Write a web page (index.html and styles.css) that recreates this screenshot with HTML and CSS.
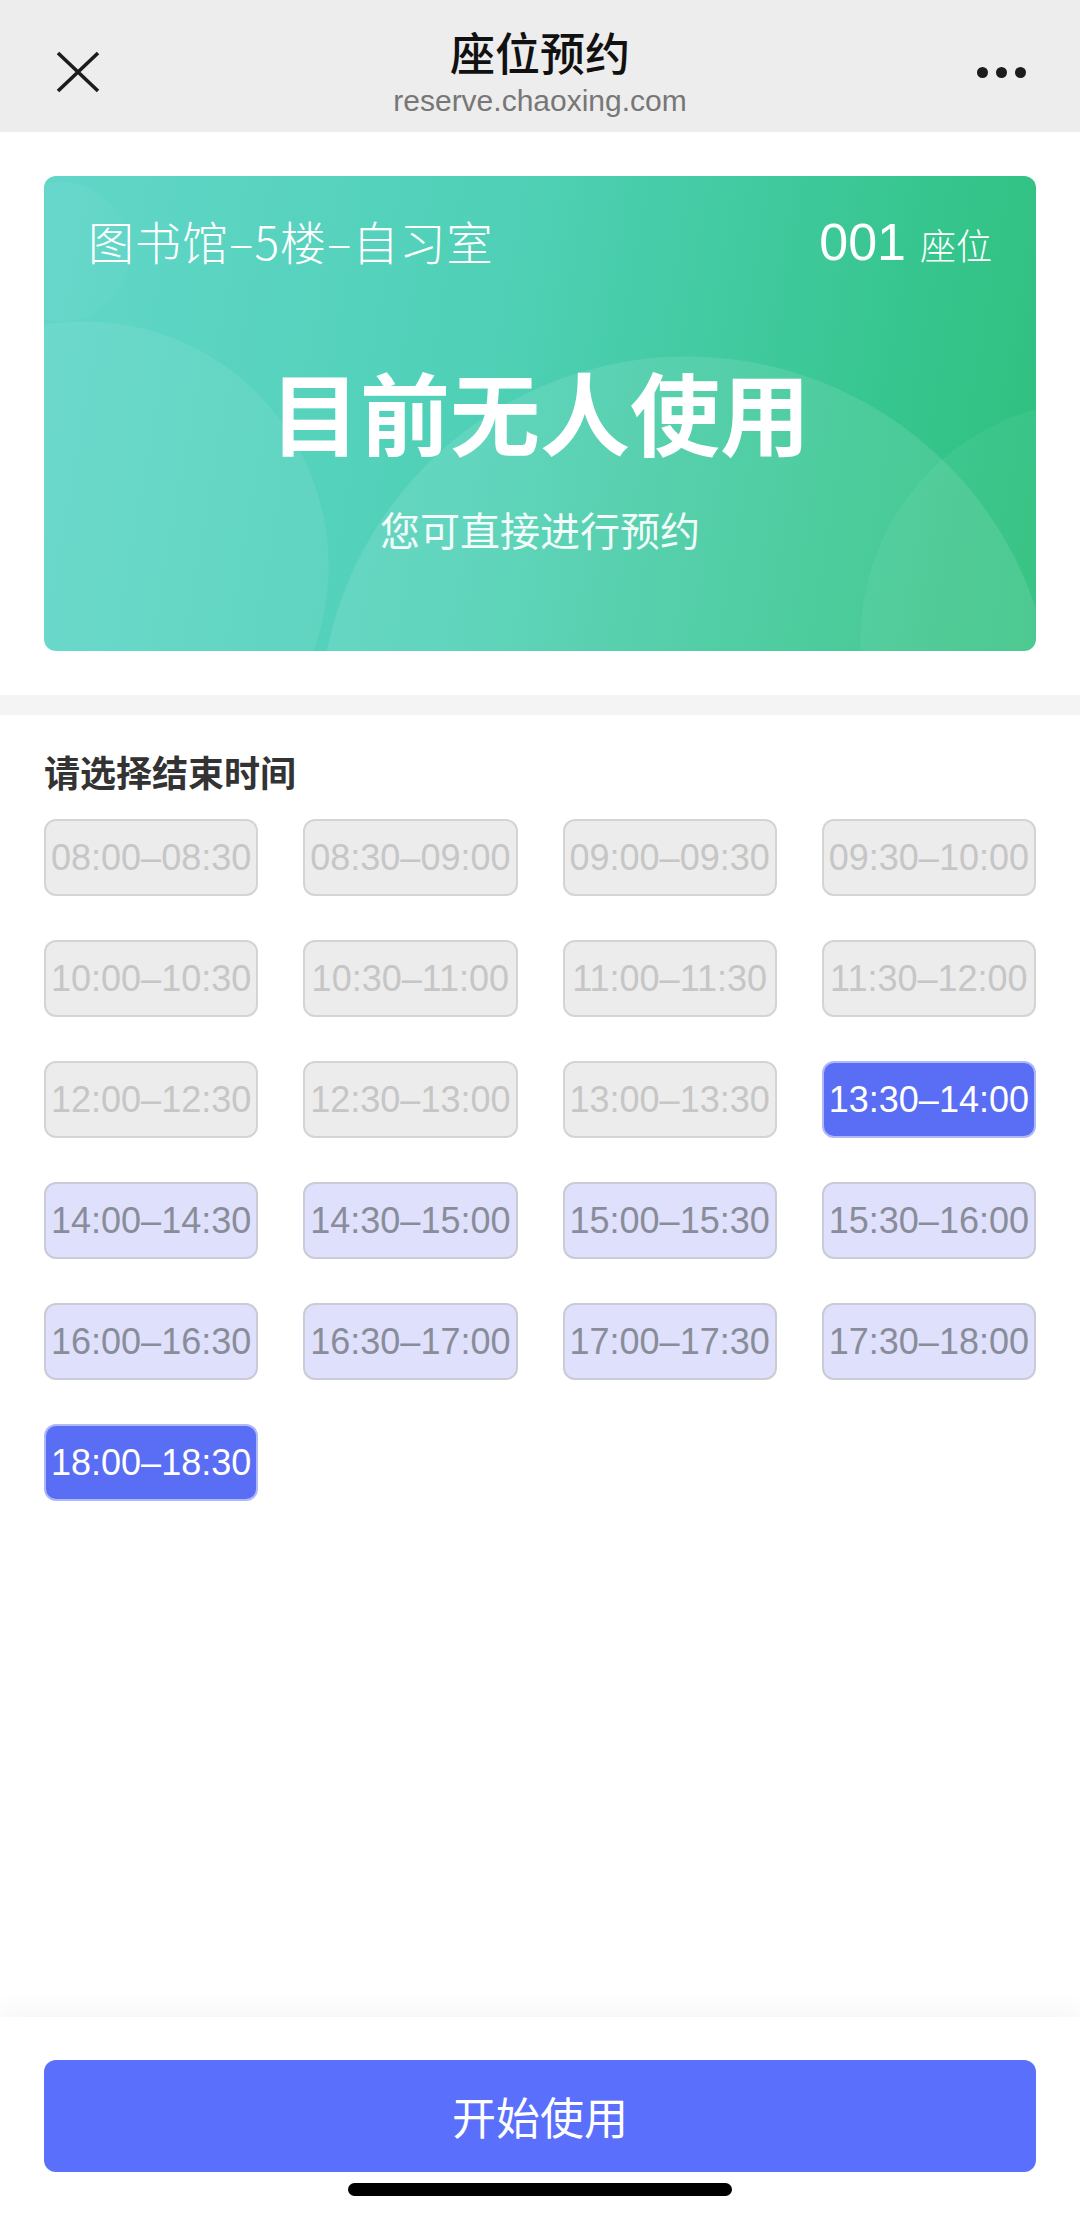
FILE: index.html
```html
<!DOCTYPE html>
<html lang="zh-CN">
<head>
<meta charset="UTF-8">
<meta name="viewport" content="width=device-width, initial-scale=1.0">
<title>座位预约</title>
<link rel="stylesheet" href="styles.css">
</head>
<body>
  <header class="nav">
    <div class="nav-side">
      <svg class="nav-close" width="44" height="42" viewBox="0 0 44 42">
        <path d="M2 2 L42 40 M42 2 L2 40" stroke="#1c1c1c" stroke-width="3.6" fill="none"/>
      </svg>
    </div>
    <div class="nav-center">
      <div class="nav-title">座位预约</div>
      <div class="nav-url">reserve.chaoxing.com</div>
    </div>
    <div class="nav-side nav-right">
      <span class="dot"></span><span class="dot"></span><span class="dot"></span>
    </div>
  </header>

  <main class="page">
    <section class="seat-card">
      <div class="seat-head">
        <span class="seat-place">图书馆–5楼–自习室</span>
        <span class="seat-no">001<small>座位</small></span>
      </div>
      <div class="seat-status">目前无人使用</div>
      <div class="seat-tip">您可直接进行预约</div>
    </section>

    <div class="divider"></div>

    <section class="time-section">
      <h2 class="time-title">请选择结束时间</h2>
      <div class="time-grid">
        <button class="slot disabled">08:00–08:30</button>
        <button class="slot disabled">08:30–09:00</button>
        <button class="slot disabled">09:00–09:30</button>
        <button class="slot disabled">09:30–10:00</button>
        <button class="slot disabled">10:00–10:30</button>
        <button class="slot disabled">10:30–11:00</button>
        <button class="slot disabled">11:00–11:30</button>
        <button class="slot disabled">11:30–12:00</button>
        <button class="slot disabled">12:00–12:30</button>
        <button class="slot disabled">12:30–13:00</button>
        <button class="slot disabled">13:00–13:30</button>
        <button class="slot on">13:30–14:00</button>
        <button class="slot">14:00–14:30</button>
        <button class="slot">14:30–15:00</button>
        <button class="slot">15:00–15:30</button>
        <button class="slot">15:30–16:00</button>
        <button class="slot">16:00–16:30</button>
        <button class="slot">16:30–17:00</button>
        <button class="slot">17:00–17:30</button>
        <button class="slot">17:30–18:00</button>
        <button class="slot on">18:00–18:30</button>
      </div>
    </section>
  </main>

  <footer class="footer">
    <button class="start-btn">开始使用</button>
    <div class="home-bar"></div>
  </footer>
</body>
</html>
```
FILE: styles.css
```css
html, body {
  margin: 0;
  padding: 0;
}

body {
  font-family: "Liberation Sans", "Noto Sans CJK SC", sans-serif;
  background-color: #fff;
  color: #333;
  min-height: 100vh;
  display: flex;
  flex-direction: column;
}

/* top navigation */
.nav {
  height: 132px;
  box-sizing: border-box;
  padding-top: 19px;
  background-color: #ededed;
  display: grid;
  grid-template-columns: 1fr auto 1fr;
  align-items: start;
}

.nav-side {
  display: flex;
  align-items: center;
  height: 106px;
  padding-left: 56px;
}

.nav-close {
  display: block;
}

.nav-right {
  justify-content: flex-end;
  padding-left: 0;
  padding-right: 54px;
  gap: 8px;
}

.dot {
  width: 11px;
  height: 11px;
  border-radius: 50%;
  background-color: #1c1c1c;
}

.nav-center {
  text-align: center;
}

.nav-title {
  font-family: "Noto Sans CJK SC", sans-serif;
  font-size: 45px;
  line-height: normal;
  font-weight: 500;
  color: #111;
}

.nav-url {
  font-size: 30px;
  line-height: normal;
  color: #777;
}

/* seat card */
.page {
  flex: 1;
}

.seat-card {
  margin: 44px 44px 0;
  height: 475px;
  box-sizing: border-box;
  padding: 36px 44px 0;
  border-radius: 12px;
  color: #fff;
  background:
    radial-gradient(circle 70px at 16px 76px, rgba(255, 255, 255, 0.03) 99%, transparent 100%),
    radial-gradient(circle 245px at 40px 390px, rgba(255, 255, 255, 0.07) 99.6%, transparent 100%),
    radial-gradient(circle 240px at 1056px 464px, rgba(255, 255, 255, 0.05) 99.6%, transparent 100%),
    radial-gradient(circle 368px at 643px 548px, rgba(255, 255, 255, 0.1) 99.7%, transparent 100%),
    linear-gradient(100deg, #62d6c9 0%, #4fd0b6 45%, #38c691 80%, #2ec07d 100%);
}

.seat-head {
  display: flex;
  justify-content: space-between;
  align-items: baseline;
  line-height: 56px;
}

.seat-place {
  font-family: "Noto Sans CJK SC", sans-serif;
  font-size: 46px;
  font-weight: 300;
  letter-spacing: 1px;
}

.seat-no {
  font-size: 52px;
  font-weight: 300;
}

.seat-no small {
  font-family: "Noto Sans CJK SC", sans-serif;
  font-size: 36px;
  margin-left: 14px;
}

.seat-status {
  margin-top: 88px;
  text-align: center;
  font-family: "Noto Sans CJK SC", sans-serif;
  font-size: 90px;
  line-height: 100px;
  font-weight: 700;
}

.seat-tip {
  margin-top: 48px;
  text-align: center;
  font-size: 40px;
  line-height: 48px;
  opacity: 0.92;
}

.divider {
  margin-top: 44px;
  height: 20px;
  background-color: #f4f4f4;
}

/* time slots */
.time-section {
  padding: 34px 44px 0;
}

.time-title {
  margin: 0;
  font-family: "Noto Sans CJK SC", sans-serif;
  font-size: 36px;
  line-height: 44px;
  font-weight: 700;
  color: #333;
}

.time-grid {
  margin-top: 26px;
  display: grid;
  grid-template-columns: repeat(4, 1fr);
  column-gap: 45px;
  row-gap: 44px;
}

.slot {
  height: 77px;
  padding: 0;
  font-family: "Liberation Sans", sans-serif;
  font-size: 36px;
  border-radius: 12px;
  border: 2px solid #cacbd6;
  background-color: #dfe0fb;
  color: #898d9a;
  white-space: nowrap;
  cursor: pointer;
}

.slot.disabled {
  background-color: #ececec;
  border-color: #d4d4d4;
  color: #c6c6c6;
  cursor: default;
}

.slot.on {
  background-color: #5a6df5;
  border-color: #b0b9f8;
  color: #fff;
}

/* bottom bar */
.footer {
  padding: 43px 44px 18px;
  background-color: #fff;
  box-shadow: 0 -10px 22px rgba(0, 0, 0, 0.035);
  display: flex;
  flex-direction: column;
  align-items: center;
}

.start-btn {
  width: 100%;
  height: 112px;
  border: none;
  border-radius: 12px;
  background-color: #5a6ffb;
  color: #fff;
  font-family: "Noto Sans CJK SC", sans-serif;
  font-size: 44px;
  cursor: pointer;
}

.home-bar {
  margin-top: 11px;
  width: 384px;
  height: 13px;
  border-radius: 7px;
  background-color: #000;
}
```
